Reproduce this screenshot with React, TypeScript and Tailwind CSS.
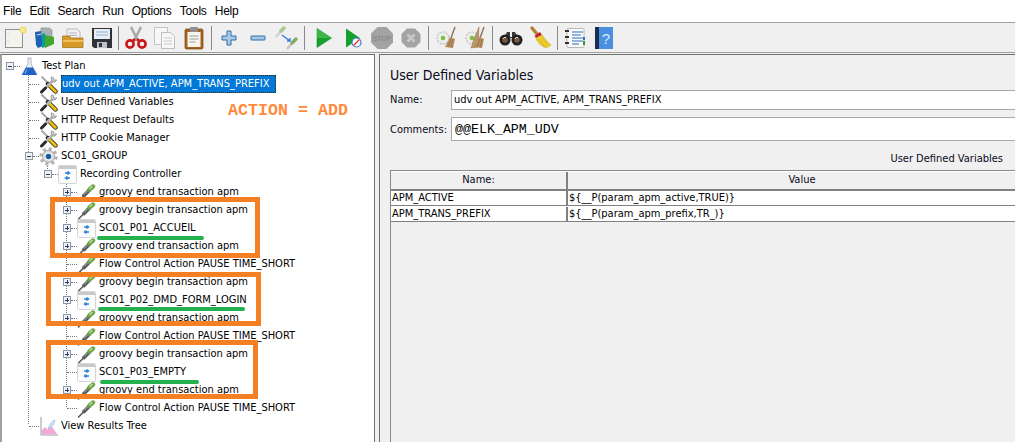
const Flask = () => (
  <svg width="19" height="19" viewBox="0 0 19 19">
    <path d="M8 1h3v6l6 10.5H2L8 7z" fill="#eef1f6" stroke="#9aa3b5" strokeWidth="0.8" />
    <path d="M6 10.5h7l4 7.5H2z" fill="#1f63c9" />
    <path d="M7 12.5l-2 4" stroke="#8fb8f0" strokeWidth="1" />
  </svg>
)

const Tools = () => (
  <svg width="19" height="19" viewBox="0 0 19 19">
    <path d="M2.500 1.500l7 7" stroke="#a8a8a8" strokeWidth="2" />
    <path d="M9 9l7.500 7.500" stroke="#222" strokeWidth="4.400" strokeLinecap="round" />
    <path d="M9.500 9.500l7 7" stroke="#f0c20e" strokeWidth="2.800" strokeLinecap="round" />
    <path d="M15 4.500L3 16.500" stroke="#b0b0b0" strokeWidth="2.600" />
    <path d="M6.500 13L2.500 17" stroke="#2b2b2b" strokeWidth="3" strokeLinecap="round" />
    <path d="M12.500 1.800a3.600 3.600 0 0 0 3.600 5.300l1.600-2.200-2.600.3-.6-2.500z" fill="#cfcfcf" stroke="#777" strokeWidth="0.600" />
  </svg>
)

const Pipette = () => (
  <svg width="19" height="19" viewBox="0 0 19 19">
    <path d="M1.500 18L7 12.500" stroke="#5a5a5a" strokeWidth="1.600" strokeLinecap="round" />
    <path d="M6 13.500L12.500 7" stroke="#56605a" strokeWidth="3.800" />
    <path d="M12.500 6.500L16 3.500" stroke="#6fa64c" strokeWidth="4.400" strokeLinecap="round" />
    <path d="M13 5.500L15 3.500" stroke="#c2e49e" strokeWidth="1.200" strokeLinecap="round" />
    <path d="M7 11.500l3.500-3.500" stroke="#c5cdc5" strokeWidth="0.800" />
  </svg>
)

const ControllerIcon = () => (
  <svg width="19" height="19" viewBox="0 0 19 19">
    <rect x="0.5" y="0.5" width="18" height="18" rx="1" fill="#fbfbfb" stroke="#d5d5d5" />
    <rect x="1" y="1" width="17" height="3" fill="#c9c9c9" />
    <path d="M7 8h4M9.5 6.5L11.5 8 9.5 9.5" stroke="#2b7fd8" strokeWidth="1.5" fill="none" />
    <path d="M12 13H8M9.5 11.5L7.5 13l2 1.5" stroke="#2b7fd8" strokeWidth="1.5" fill="none" />
  </svg>
)

const GearIcon = () => (
  <svg width="19" height="19" viewBox="0 0 19 19">
    <circle cx="9.5" cy="9.5" r="7.5" fill="none" stroke="#b3b3b3" strokeWidth="3.4" strokeDasharray="2.9 2.99" />
    <circle cx="9.5" cy="9.5" r="6.2" fill="#d6d6d6" stroke="#8f8f8f" strokeWidth="0.6" />
    <circle cx="9.5" cy="9.5" r="3.4" fill="#1d5da8" stroke="#f4f4f4" strokeWidth="1.2" />
  </svg>
)

const ResultsIcon = () => (
  <svg width="19" height="19" viewBox="0 0 19 19">
    <path d="M2 0v18h17" fill="none" stroke="#9a9a9a" />
    <path d="M3 17v-4l3-3 3 3 2-5 3 3 4 6z" fill="#f3a8d8" />
    <path d="M9 12c1-4 4-8 7-9-1 3-2 7-5 8z" fill="#cfe2f7" stroke="#89aed6" strokeWidth="0.6" />
  </svg>
)

const NewIcon = () => (
  <svg width="24" height="24" viewBox="0 0 24 24">
    <rect x="2.5" y="3.5" width="17" height="18" fill="#f4f4ee" stroke="#8f8f8f" />
    <circle cx="20" cy="4" r="3" fill="#f7ec8d" stroke="#ecd24f" />
    <circle cx="5" cy="8" r="0.6" fill="#aaa" />
    <circle cx="5" cy="15" r="0.6" fill="#aaa" />
  </svg>
)

const TemplatesIcon = () => (
  <svg width="24" height="24" viewBox="0 0 24 24">
    <path d="M9 2h8l3 2v8H9z" fill="#a9b2b2" stroke="#7c8787" strokeWidth="0.6" />
    <path d="M3 6l6-1 2 15-5 2-2-3z" fill="#1b63b0" />
    <path d="M10 8l3-1v14l-3 1z" fill="#0d9a9c" />
    <path d="M13 9l9 2v7l-9 4z" fill="#43a82e" />
    <path d="M5 9l4-1" stroke="#cfe3ff" strokeWidth="1" />
  </svg>
)

const OpenIcon = () => (
  <svg width="24" height="24" viewBox="0 0 24 24">
    <path d="M6 3h10l3 3v8H6z" fill="#f1f1f1" stroke="#a2a2a2" strokeWidth="0.7" />
    <path d="M8 7h8M8 9.5h8" stroke="#b5b5b5" />
    <path d="M1.5 10h7l1.5 2h12v9.5h-20.500z" fill="#d89a27" stroke="#9c6c14" strokeWidth="0.7" />
    <path d="M2 14h20v2H2z" fill="#eec05b" />
  </svg>
)

const SaveIcon = () => (
  <svg width="24" height="24" viewBox="0 0 24 24">
    <path d="M2 2h20v20H4l-2-2z" fill="#2f3338" />
    <rect x="4" y="3" width="16" height="10" fill="#e6edf5" />
    <path d="M6 6h12M6 9h12" stroke="#8fb2d6" />
    <rect x="7" y="16" width="10" height="6" fill="#bfc3c7" />
    <rect x="9" y="17" width="3" height="4" fill="#2f3338" />
  </svg>
)

const CutIcon = () => (
  <svg width="24" height="24" viewBox="0 0 24 24">
    <path d="M7 1l7 14M17 1l-7 14" stroke="#a9a9a9" strokeWidth="2.6" />
    <circle cx="6" cy="18" r="3.6" fill="none" stroke="#c8181c" strokeWidth="2.6" />
    <circle cx="18" cy="18" r="3.6" fill="none" stroke="#c8181c" strokeWidth="2.6" />
    <path d="M8 16l3-3M16 16l-3-3" stroke="#c8181c" strokeWidth="2.6" />
  </svg>
)

const CopyIcon = () => (
  <svg width="24" height="24" viewBox="0 0 24 24">
    <rect x="1.500" y="1.500" width="13" height="17" fill="#f7f7f7" stroke="#c5c5c5" />
    <path d="M8.500 6.500h9l4 4v12h-13z" fill="#f7f7f7" stroke="#bdbdbd" />
    <path d="M11 12h8M11 15h8M11 18h8" stroke="#c9c9c9" />
  </svg>
)

const PasteIcon = () => (
  <svg width="24" height="24" viewBox="0 0 24 24">
    <rect x="3" y="3" width="18" height="20" rx="1.500" fill="#a8641e" stroke="#74440f" strokeWidth="0.7" />
    <rect x="5.500" y="6" width="13" height="15" fill="#f5f5ee" />
    <rect x="8" y="1" width="8" height="5" rx="1" fill="#8f8f8f" />
    <path d="M7.500 10h9M7.500 13h9M7.500 16h6" stroke="#9d9d9d" />
  </svg>
)

const PlusIcon = () => (
  <svg width="24" height="24" viewBox="0 0 24 24">
    <path d="M10 5h4v5h5v4h-5v5h-4v-5H5v-4h5z" fill="#a9c8e6" stroke="#2f6ea8" strokeWidth="1" />
  </svg>
)

const MinusIcon = () => (
  <svg width="24" height="24" viewBox="0 0 24 24">
    <rect x="5" y="10" width="14" height="4" rx="0.500" fill="#a9c8e6" stroke="#2f6ea8" />
  </svg>
)

const ToggleIcon = () => (
  <svg width="24" height="24" viewBox="0 0 24 24">
    <path d="M1 11l5-6" stroke="#d0d0d0" strokeWidth="2.500" />
    <path d="M6 5l3-3" stroke="#a7c98d" strokeWidth="3.500" strokeLinecap="round" />
    <path d="M12 23l5-6" stroke="#c6c6c6" strokeWidth="2.500" />
    <path d="M17 17l4-4" stroke="#85ad62" strokeWidth="3.500" strokeLinecap="round" />
    <path d="M7 9l8 6M12 15h3v-3" stroke="#2d7fe0" strokeWidth="1.400" fill="none" />
  </svg>
)

const PlayIcon = () => (
  <svg width="24" height="24" viewBox="0 0 24 24">
    <path d="M5 2.500L19.500 12 5 21.500z" fill="#16a02c" stroke="#0e7a1e" strokeWidth="0.500" />
    <path d="M5 2.500L19.500 12H5z" fill="#3cb64b" />
  </svg>
)

const PlayNoTimerIcon = () => (
  <svg width="24" height="24" viewBox="0 0 24 24">
    <path d="M5 2.500L19 12 5 21.500z" fill="#16a02c" />
    <circle cx="15.500" cy="16.500" r="4.500" fill="#fff" stroke="#3a7bd5" strokeWidth="1.200" />
    <path d="M12.500 19.500l6-6" stroke="#d92b2b" strokeWidth="1.300" />
  </svg>
)

const StopIcon = () => (
  <svg width="24" height="24" viewBox="0 0 24 24">
    <path d="M7.500 1h9L23 7.500v9L16.500 23h-9L1 16.500v-9z" fill="#a3a3a3" />
    <text x="12" y="14.500" textAnchor="middle" fontSize="7" fontWeight="700" fill="#8a8a8a" fontFamily="Liberation Sans, sans-serif">STOP</text>
  </svg>
)

const ShutdownIcon = () => (
  <svg width="24" height="24" viewBox="0 0 24 24">
    <path d="M8 2.500h8L21.500 8v8L16 21.500H8L2.500 16V8z" fill="#a3a3a3" />
    <path d="M8.500 8.500l7 7M15.500 8.500l-7 7" stroke="#c9c9c9" strokeWidth="2.800" />
  </svg>
)

const ClearIcon = ({ double = false }: { double?: boolean }) => (
  <svg width="24" height="24" viewBox="0 0 24 24">
    <circle cx="9" cy="12" r="6" fill="#ededed" stroke="#c9c9c9" strokeWidth="1.400" strokeDasharray="2.400 1" />
    <circle cx="9" cy="12" r="2.300" fill="#7cc142" />
    {double && <path d="M16 1L11 13l-3 9 7-1z" fill="#b9966b" stroke="#8d6c44" strokeWidth="0.500" />}
    <path d="M21 1l-4 11" stroke="#8f7757" strokeWidth="1.500" />
    <path d="M16 11l5 2-2 9-8-1z" fill="#b8905f" />
    <path d="M14 21l3-8M17 21.500l2-8" stroke="#8a683f" strokeWidth="0.700" />
  </svg>
)

const BinocularsIcon = () => (
  <svg width="24" height="24" viewBox="0 0 24 24">
    <path d="M8 6h3v5h2V6h3l2 4-1 2H7l-1-2z" fill="#3a3a3a" />
    <circle cx="6" cy="14" r="5.500" fill="#222" />
    <circle cx="18" cy="14" r="5.500" fill="#222" />
    <circle cx="6" cy="14" r="2.700" fill="#7a5a3a" />
    <circle cx="18" cy="14" r="2.700" fill="#7a5a3a" />
    <path d="M4 13a2.500 2.500 0 0 1 3-1.500M16 13a2.500 2.500 0 0 1 3-1.500" stroke="#e6e6e6" fill="none" />
  </svg>
)

const BroomIcon = () => (
  <svg width="24" height="24" viewBox="0 0 24 24">
    <path d="M4 2l5 6" stroke="#b5803a" strokeWidth="3.400" strokeLinecap="round" />
    <path d="M6.500 10L12 6l2 3-6 3z" fill="#c8202a" />
    <path d="M8 12l6-3c3 4 6 8 9 10-2 2-5 3-7 2-4-2-7-5-8-9z" fill="#f0cf2c" stroke="#bd9c12" strokeWidth="0.500" />
    <path d="M11 13l6 8M14 12l6 7" stroke="#c9a716" strokeWidth="0.700" />
  </svg>
)

const ListIcon = () => (
  <svg width="24" height="24" viewBox="0 0 24 24">
    <rect x="4" y="2.500" width="17" height="19" rx="1" fill="#fbfbfb" stroke="#b8b8b8" />
    <path d="M9 6h11M9 9h9M9 12h11M9 15h11M9 18h7" stroke="#2f6fc4" strokeWidth="1.200" />
    <path d="M2 5h4M2 11h4M2 17h4" stroke="#333" strokeWidth="2" />
    <rect x="20" y="11" width="2" height="3" fill="#2f6fc4" />
    <rect x="20" y="15" width="2" height="4" fill="#2a9a3b" />
  </svg>
)

const HelpIcon = () => (
  <svg width="24" height="24" viewBox="0 0 24 24">
    <rect x="3" y="1" width="5" height="22" fill="#1b2f4d" />
    <rect x="7" y="1" width="14" height="22" fill="#4a8fe0" />
    <text x="14" y="18" textAnchor="middle" fontSize="15" fill="#dbe9fb" fontFamily="Liberation Sans, sans-serif">?</text>
  </svg>
)

const ToolButton = ({ children }: { children: React.ReactNode }) => (
  <div className="flex h-[29px] w-[29px] items-center justify-center">{children}</div>
)

const MENU = ['File', 'Edit', 'Search', 'Run', 'Options', 'Tools', 'Help']

// level drives the indent class, written out so tailwind picks it up
const INDENT = ['pl-[6px]', 'pl-[25px]', 'pl-[44px]', 'pl-[63px]']

type Row = {
  level: number
  label: string
  icon: React.ReactNode
  handle?: 'open' | 'closed'
  selected?: boolean
}

const ROWS: Row[] = [
  { level: 0, label: 'Test Plan', icon: <Flask />, handle: 'open' },
  { level: 1, label: 'udv out APM_ACTIVE, APM_TRANS_PREFIX', icon: <Tools />, selected: true },
  { level: 1, label: 'User Defined Variables', icon: <Tools /> },
  { level: 1, label: 'HTTP Request Defaults', icon: <Tools /> },
  { level: 1, label: 'HTTP Cookie Manager', icon: <Tools /> },
  { level: 1, label: 'SC01_GROUP', icon: <GearIcon />, handle: 'open' },
  { level: 2, label: 'Recording Controller', icon: <ControllerIcon />, handle: 'open' },
  { level: 3, label: 'groovy end transaction apm', icon: <Pipette />, handle: 'closed' },
  { level: 3, label: 'groovy begin transaction apm', icon: <Pipette />, handle: 'closed' },
  { level: 3, label: 'SC01_P01_ACCUEIL', icon: <ControllerIcon />, handle: 'closed' },
  { level: 3, label: 'groovy end transaction apm', icon: <Pipette />, handle: 'closed' },
  { level: 3, label: 'Flow Control Action PAUSE TIME_SHORT', icon: <Pipette /> },
  { level: 3, label: 'groovy begin transaction apm', icon: <Pipette />, handle: 'closed' },
  { level: 3, label: 'SC01_P02_DMD_FORM_LOGIN', icon: <ControllerIcon />, handle: 'closed' },
  { level: 3, label: 'groovy end transaction apm', icon: <Pipette />, handle: 'closed' },
  { level: 3, label: 'Flow Control Action PAUSE TIME_SHORT', icon: <Pipette /> },
  { level: 3, label: 'groovy begin transaction apm', icon: <Pipette />, handle: 'closed' },
  { level: 3, label: 'SC01_P03_EMPTY', icon: <ControllerIcon /> },
  { level: 3, label: 'groovy end transaction apm', icon: <Pipette />, handle: 'closed' },
  { level: 3, label: 'Flow Control Action PAUSE TIME_SHORT', icon: <Pipette /> },
  { level: 1, label: 'View Results Tree', icon: <ResultsIcon /> },
]

const Handle = ({ open }: { open: boolean }) => (
  <span className="relative flex h-[8px] w-[8px] shrink-0 items-center justify-center border border-[#8a97a8] bg-[#f1f1f1]">
    <span className="h-px w-[4px] bg-[#223c70]" />
    {!open && <span className="absolute h-[4px] w-px bg-[#223c70]" />}
  </span>
)

function TreeRow({ row }: { row: Row }) {
  return (
    <div className={`flex h-[18px] items-center ${INDENT[row.level]}`}>
      {row.handle ? (
        <>
          <Handle open={row.handle === 'open'} />
          <span className="w-[6px] shrink-0 border-t border-dotted border-[#777]" />
        </>
      ) : (
        <>
          <span className="w-[4px] shrink-0" />
          <span className="w-[10px] shrink-0 border-t border-dotted border-[#777]" />
        </>
      )}
      <span className="flex w-[19px] shrink-0 justify-center">{row.icon}</span>
      {row.selected ? (
        <span className="ml-[3px] flex h-[18px] w-[215px] items-center whitespace-nowrap border border-dotted border-[#3a2a00] bg-[#0078d7] text-white">
          {row.label}
        </span>
      ) : (
        <span className="ml-[3px] whitespace-nowrap text-black">{row.label}</span>
      )}
    </div>
  )
}

export default function App() {
  return (
    <div className="flex h-[442px] w-[1015px] flex-col overflow-hidden bg-white font-['DejaVu_Sans_Condensed','Liberation_Sans',sans-serif] text-[11px] text-[#0a0a20]">
      <div className="flex h-[22px] shrink-0 items-center gap-[8px] pl-[3px] font-['Liberation_Sans',sans-serif] text-[12px] tracking-[-0.2px] text-black">
        {MENU.map((m) => (
          <span key={m}>{m}</span>
        ))}
      </div>

      <div className="flex h-[31px] shrink-0 items-center border-y border-[#a0a0a0] bg-[#f0f0f0]">
        <ToolButton><NewIcon /></ToolButton>
        <ToolButton><TemplatesIcon /></ToolButton>
        <ToolButton><OpenIcon /></ToolButton>
        <ToolButton><SaveIcon /></ToolButton>
        <div className="ml-[2px] mr-[2px] h-[24px] w-px bg-[#8a8a8a]" />
        <ToolButton><CutIcon /></ToolButton>
        <ToolButton><CopyIcon /></ToolButton>
        <ToolButton><PasteIcon /></ToolButton>
        <div className="ml-[3px] mr-[2px] h-[24px] w-px bg-[#8a8a8a]" />
        <ToolButton><PlusIcon /></ToolButton>
        <ToolButton><MinusIcon /></ToolButton>
        <ToolButton><ToggleIcon /></ToolButton>
        <div className="ml-[3px] mr-[4px] h-[24px] w-px bg-[#8a8a8a]" />
        <ToolButton><PlayIcon /></ToolButton>
        <ToolButton><PlayNoTimerIcon /></ToolButton>
        <ToolButton><StopIcon /></ToolButton>
        <ToolButton><ShutdownIcon /></ToolButton>
        <div className="ml-[3px] mr-[2px] h-[24px] w-px bg-[#8a8a8a]" />
        <ToolButton><ClearIcon /></ToolButton>
        <ToolButton><ClearIcon double /></ToolButton>
        <div className="ml-[3px] mr-[3px] h-[24px] w-px bg-[#8a8a8a]" />
        <ToolButton><BinocularsIcon /></ToolButton>
        <ToolButton><BroomIcon /></ToolButton>
        <div className="ml-[3px] mr-[2px] h-[24px] w-px bg-[#8a8a8a]" />
        <ToolButton><ListIcon /></ToolButton>
        <ToolButton><HelpIcon /></ToolButton>
      </div>

      <div className="flex min-h-0 flex-1 bg-[#f0f0f0] pt-[1px]">
        {/* tree */}
        <div className="relative w-[375px] shrink-0 border-l-2 border-r border-t border-l-[#a0a0a0] border-r-[#707070] border-t-[#707070] bg-white pt-[2px]">
          <svg className="pointer-events-none absolute -left-[2px] -top-[55px] h-[442px] w-[375px]">
            <g stroke="#777" strokeDasharray="1 1">
              <line x1="28.500" y1="73" x2="28.500" y2="425" />
              <line x1="47.500" y1="162" x2="47.500" y2="173" />
              <line x1="66.500" y1="180" x2="66.500" y2="407" />
            </g>
          </svg>
          <div className="relative -ml-[2px]">
            {ROWS.map((row, i) => (
              <TreeRow key={i} row={row} />
            ))}
          </div>

          {/* annotations pasted on top of the screenshot */}
          <span className="absolute -left-[2px] top-[48px] ml-[228px] whitespace-nowrap font-['Liberation_Mono',monospace] text-[16.67px] font-bold leading-none text-[#ff8a3c]">
            ACTION = ADD
          </span>
          <div className="absolute left-[48px] top-[142px] h-[61px] w-[210px] border-[5px] border-[#f58024]" />
          <div className="absolute left-[44px] top-[217px] h-[54px] w-[215px] border-[5px] border-[#f58024]" />
          <div className="absolute left-[44px] top-[285px] h-[59px] w-[212px] border-[5px] border-[#f58024]" />
          <div className="absolute left-[95px] top-[181px] h-[4px] w-[107px] rounded-full bg-[#22b14c]" />
          <div className="absolute left-[96px] top-[252px] h-[4px] w-[147px] rounded-full bg-[#22b14c]" />
          <div className="absolute left-[98px] top-[325px] h-[4px] w-[99px] rounded-full bg-[#22b14c]" />
        </div>

        {/* details */}
        <div className="ml-[4px] flex min-w-0 flex-1 flex-col overflow-hidden border-l border-t border-[#707070] bg-[#f0f0f0] pl-[10px]">
          <div className="mt-[11px] text-[14px] leading-[18px]">User Defined Variables</div>

          <div className="mt-[6px] flex h-[20px] items-center">
            <span className="w-[61px] shrink-0 pt-px">Name:</span>
            <div className="flex h-[20px] w-[600px] shrink-0 items-center border border-[#a8a8b0] bg-white pl-[2px] pt-px text-black">
              udv out APM_ACTIVE, APM_TRANS_PREFIX
            </div>
          </div>

          <div className="mt-[7px] flex h-[24px] items-center">
            <span className="w-[61px] shrink-0 pt-[2px]">Comments:</span>
            <div className="flex h-[24px] w-[600px] shrink-0 items-center border border-[#a8a8b0] bg-white pl-[3px] pt-[2px] font-['Liberation_Mono',monospace] text-[13.300px] text-black">
              @@ELK_APM_UDV
            </div>
          </div>

          <div className="mt-[9px] h-[20px] pr-[12px] pt-px text-right leading-[16px]">User Defined Variables</div>

          <div className="w-[660px] flex-1 border-l border-t border-[#8a8a8a]">
            <div className="flex h-[20px] border-b-2 border-t border-b-[#808080] border-t-white">
              <div className="flex w-[177px] items-center justify-center border-r-2 border-[#808080]">Name:</div>
              <div className="flex flex-1 items-center justify-center pr-[14px]">Value</div>
            </div>
            <div className="flex h-[15px] border-b border-[#808080] bg-white text-black">
              <div className="flex w-[177px] items-center border-r-2 border-[#808080] pl-px">APM_ACTIVE</div>
              <div className="flex flex-1 items-center pl-px">{'${__P(param_apm_active,TRUE)}'}</div>
            </div>
            <div className="flex h-[16px] border-b border-[#808080] bg-white pt-px text-black">
              <div className="flex w-[177px] items-center border-r-2 border-[#808080] pl-px">APM_TRANS_PREFIX</div>
              <div className="flex flex-1 items-center pl-px">{'${__P(param_apm_prefix,TR_)}'}</div>
            </div>
          </div>
        </div>
      </div>
    </div>
  )
}
